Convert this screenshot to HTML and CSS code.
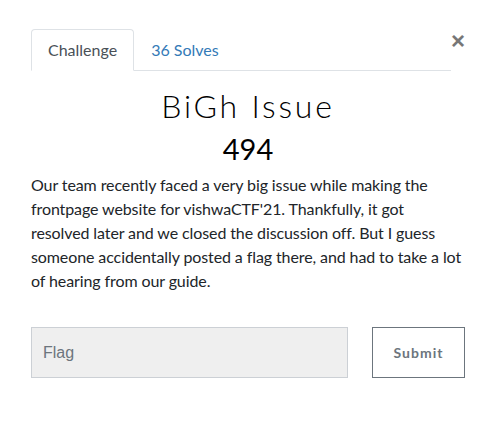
FILE: index.html
```html
<!DOCTYPE html>
<html>
<head>
<meta charset="utf-8">
<link rel="stylesheet" href="styles.css">
</head>
<body>
<div class="modal">
  <div class="header">
    <ul class="tabs">
      <li class="tab active">Challenge</li>
      <li class="tab link">36 Solves</li>
    </ul>
    <button class="close">&times;</button>
  </div>
  <h3 class="name">BiGh Issue</h3>
  <h4 class="value">494</h4>
  <p class="desc">Our team recently faced a very big issue while making the frontpage website for vishwaCTF'21. Thankfully, it got resolved later and we closed the discussion off. But I guess someone accidentally posted a flag there, and had to take a lot of hearing from our guide.</p>
  <form class="form">
    <input class="flag" type="text" placeholder="Flag">
    <button type="button" class="submit">Submit</button>
  </form>
</div>
</body>
</html>
```
FILE: styles.css
```css
html, body {
  margin: 0;
  padding: 0;
  background: #fff;
}
body {
  font-family: Lato, "Noto Sans", sans-serif;
  font-size: 16px;
  line-height: 1.5;
  color: #212529;
}
.modal {
  padding: 29px 31px 0 31px;
}
.header {
  display: flex;
  align-items: flex-start;
}
.tabs {
  flex: 1;
  display: flex;
  list-style: none;
  margin: 0;
  padding: 0;
  border-bottom: 1px solid #dee2e6;
}
.tab {
  padding: 8px 16px;
  border: 1px solid transparent;
  border-top-left-radius: 4px;
  border-top-right-radius: 4px;
  margin-bottom: -1px;
}
.tab.active {
  color: #495057;
  border-color: #dee2e6 #dee2e6 #fff;
  background: #fff;
}
.tab.link {
  color: #337ab7;
}
.close {
  width: 14px;
  border: 0;
  background: transparent;
  padding: 0;
  margin-top: 0;
  font-family: "Liberation Sans", Arial, sans-serif;
  font-size: 24px;
  font-weight: 700;
  line-height: 24px;
  color: #777;
  text-align: right;
}
.name {
  margin: 16px 0 0;
  text-align: center;
  font-family: Lato, sans-serif;
  font-weight: 300;
  font-size: 32px;
  line-height: 38px;
  letter-spacing: 2.8px;
  color: #000;
}
.value {
  margin: 6px 0 0;
  text-align: center;
  font-family: Lato, sans-serif;
  font-weight: 400;
  font-size: 29px;
  line-height: 36px;
  letter-spacing: 0;
  color: #000;
}
.desc {
  margin: 6px 0 0;
  font-size: 16px;
  line-height: 24px;
  letter-spacing: -0.1px;
  color: #212529;
}
.form {
  display: flex;
  align-items: flex-start;
  margin-top: 34px;
}
.flag {
  width: 317px;
  height: 51px;
  box-sizing: border-box;
  background: #efefef;
  border: 1px solid #ccd0d5;
  padding: 0 11px;
  font-family: "Liberation Sans", Arial, sans-serif;
  font-size: 16px;
  color: #495057;
  outline: none;
}
.flag::placeholder {
  color: #6c757d;
}
.submit {
  margin-left: auto;
  width: 93px;
  height: 51px;
  box-sizing: border-box;
  background: #fff;
  border: 1px solid #6c757d;
  font-family: Lato, sans-serif;
  font-weight: 700;
  font-size: 14px;
  letter-spacing: 1px;
  color: #6c757d;
}
```
